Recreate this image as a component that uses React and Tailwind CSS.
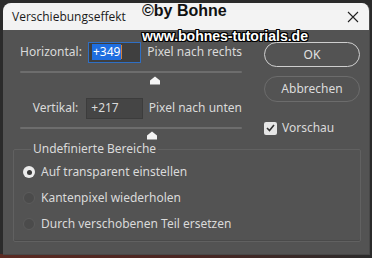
import React from 'react';

const font = { fontFamily: '"Noto Sans", "Open Sans", sans-serif' };

const Thumb = ({ left }) => (
  <div className="h-[9px] relative">
    <svg
      width="12"
      height="9"
      viewBox="0 0 12 9"
      className="absolute top-0"
      style={{ left }}
    >
      <path d="M6 0.5 L11 4.5 V8.5 H1 V4.5 Z" fill="#f4f4f4" />
    </svg>
  </div>
);

const Track = () => <div className="h-[2px] bg-[#6d6d6d] rounded-full" />;

const Radio = ({ checked, label }) => (
  <div className="flex items-center gap-[6px] h-[14px]">
    {checked ? (
      <span className="w-[12px] h-[12px] rounded-full bg-[#ececec] flex items-center justify-center">
        <span className="w-[5px] h-[5px] rounded-full bg-[#3a3a3a]" />
      </span>
    ) : (
      <span className="w-[12px] h-[12px] rounded-full bg-[#4b4b4b] border border-[#5c5c5c]" />
    )}
    <span>{label}</span>
  </div>
);

const App = () => {
  return (
    <div
      className="w-[372px] h-[258px] bg-[#2b2b2b] relative overflow-hidden text-[12px] text-[#dadada]"
      style={font}
    >
      <div className="absolute left-0 right-0 bottom-0 h-[4px] bg-gradient-to-r from-[#5a2a22] via-[#4a2622] to-[#2b2b2b]" />

      <div className="relative ml-[3px] mt-[3px] w-[367px] h-[252px] rounded-t-[8px] overflow-hidden bg-[#535353] border-r border-b border-[#484848] flex flex-col">
        {/* Title bar */}
        <div className="h-[27px] bg-[#f3f3f3] flex items-center justify-between pl-[9px] pr-[10px] text-[#1a1a1a]">
          <span className="text-[12px]" style={{ fontFamily: '"Open Sans", sans-serif' }}>Verschiebungseffekt</span>
          <svg width="12" height="12" viewBox="0 0 12 12">
            <path d="M1 1 L11 11 M11 1 L1 11" stroke="#222" strokeWidth="1.1" />
          </svg>
        </div>

        {/* Body */}
        <div className="flex pt-[12px] pl-[17px]">
          <div className="w-[222px] flex flex-col">
            <div className="flex items-center h-[20px]">
              <span className="w-[60px] text-right">Horizontal:</span>
              <div className="ml-[8px] w-[58px] h-[21px] bg-[#3f3f3f] border border-[#2f6fc4] flex items-center pl-[3px]">
                <span className="bg-[#1f6ee0] text-white px-[1px] leading-[16px]">+349</span>
                <span className="w-[1px] h-[14px] bg-[#d08040]" />
              </div>
              <span className="ml-[6px] whitespace-nowrap">Pixel nach rechts</span>
            </div>
            <div className="mt-[9px]">
              <Track />
            </div>
            <div className="mt-[3px]">
              <Thumb left={129} />
            </div>

            <div className="flex items-center h-[20px] mt-[13px]">
              <span className="w-[60px] text-right">Vertikal:</span>
              <div className="ml-[8px] w-[58px] h-[21px] bg-[#454545] border border-[#3c3c3c] flex items-center pl-[4px]">
                <span>+217</span>
              </div>
              <span className="ml-[6px] whitespace-nowrap">Pixel nach unten</span>
            </div>
            <div className="mt-[9px]">
              <Track />
            </div>
            <div className="mt-[2px]">
              <Thumb left={126} />
            </div>
          </div>

          <div className="ml-[22px] w-[96px] flex flex-col">
            <button className="h-[25px] rounded-full border border-[#cfcfcf] text-[#e2e2e2]">OK</button>
            <button className="mt-[9px] h-[26px] rounded-full border border-[#6c6c6c] text-[#dcdcdc]">Abbrechen</button>
            <label className="mt-[17px] flex items-center gap-[5px]">
              <span className="w-[13px] h-[13px] rounded-[2px] bg-[#e6e6e6] flex items-center justify-center">
                <svg width="9" height="8" viewBox="0 0 9 8">
                  <path d="M1 4 L3.5 6.5 L8 1" stroke="#333" strokeWidth="1.6" fill="none" />
                </svg>
              </span>
              <span>Vorschau</span>
            </label>
          </div>
        </div>

        {/* Group box */}
        <div className="relative mt-[9px] ml-[10px] w-[348px] h-[93px] border border-[#616161] rounded-[2px] shadow-[inset_0_-1px_0_#4a4a4a]">
          <span className="absolute -top-[9px] left-[17px] px-[2px] bg-[#535353] leading-[16px]">Undefinierte Bereiche</span>
          <div className="flex flex-col gap-[12px] pt-[15px] pl-[9px]">
            <Radio checked label="Auf transparent einstellen" />
            <Radio label="Kantenpixel wiederholen" />
            <Radio label="Durch verschobenen Teil ersetzen" />
          </div>
        </div>
      </div>

      {/* Watermark */}
      <div className="absolute left-[142px] top-[1px] text-[16px] font-bold text-[#111] leading-[20px]" style={{ fontFamily: '"Liberation Sans", sans-serif' }}>
        ©by Bohne
      </div>
      <div
        className="absolute left-[142px] top-[26px] text-[14px] font-bold text-white leading-[20px] [text-shadow:1px_0_0_#000,-1px_0_0_#000,0_1px_0_#000,0_-1px_0_#000,1px_1px_0_#000,-1px_-1px_0_#000,1px_-1px_0_#000,-1px_1px_0_#000]"
        style={{ fontFamily: '"Liberation Sans", sans-serif' }}
      >
        www.bohnes-tutorials.de
      </div>
    </div>
  );
};

export default App;
